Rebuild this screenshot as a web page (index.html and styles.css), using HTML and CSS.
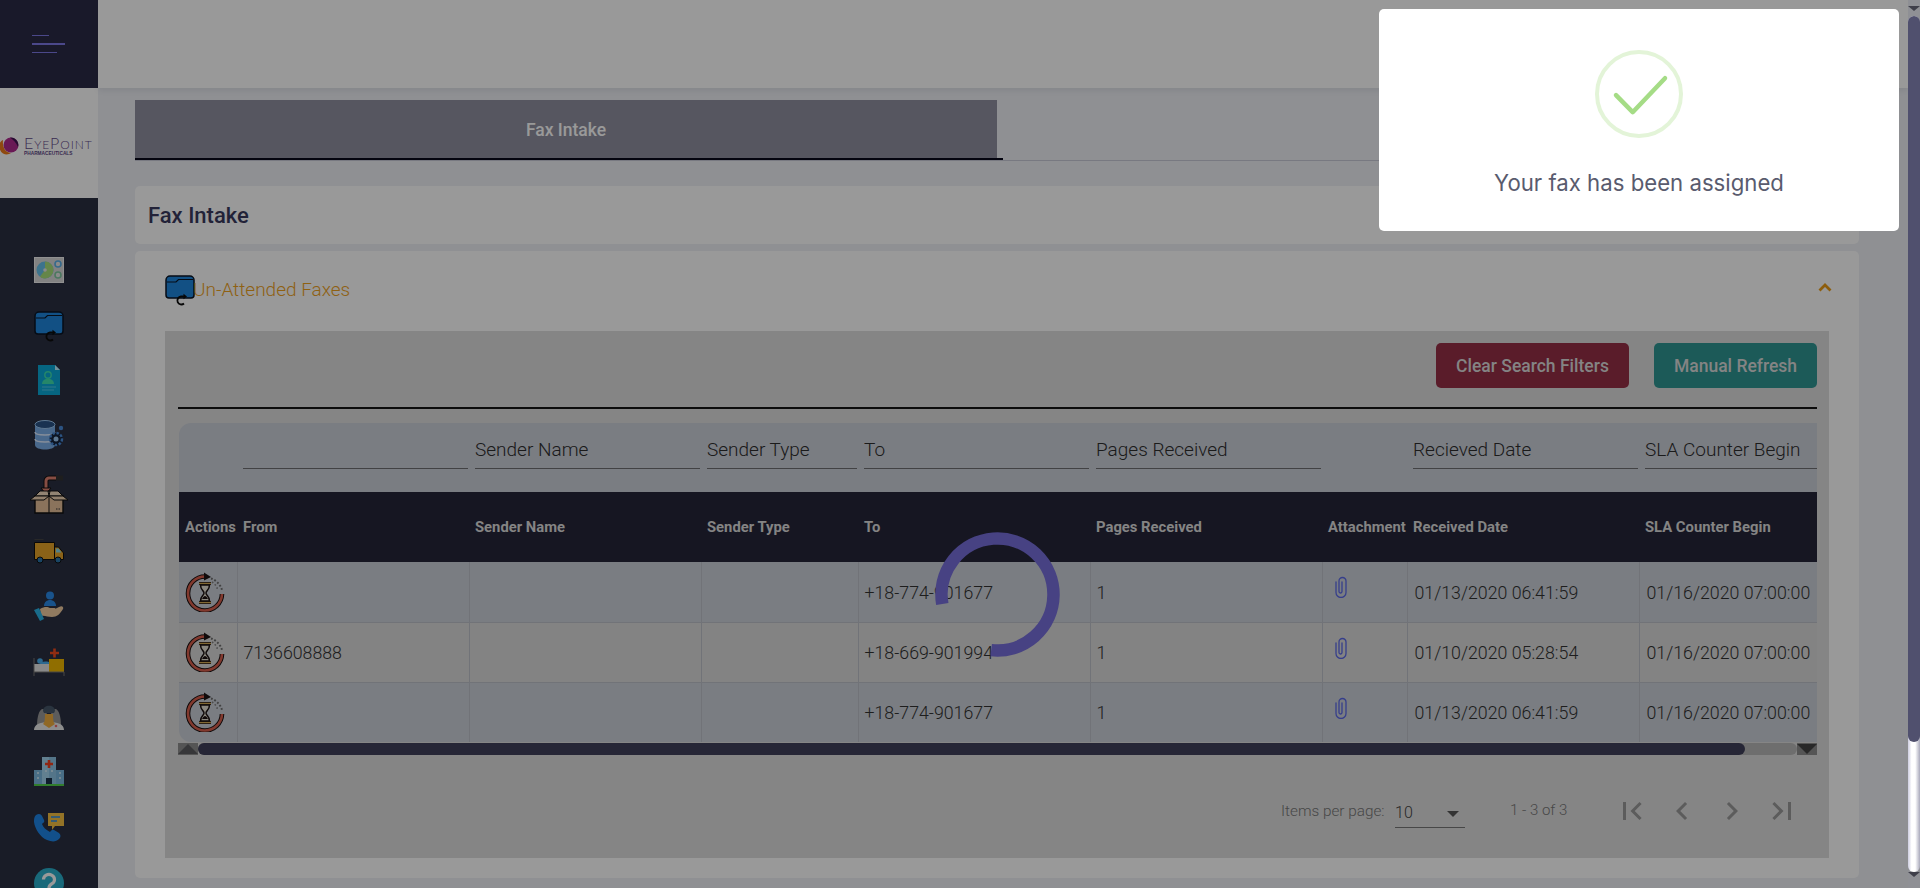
FILE: index.html
```html
<!DOCTYPE html>
<html lang="en">
<head>
<meta charset="utf-8">
<title>Fax Intake</title>
<link rel="stylesheet" href="styles.css">
</head>
<body>
<svg class="defs" width="0" height="0" aria-hidden="true">
  <symbol id="i-folder" viewBox="0 0 30 30" overflow="visible">
    <path d="M1 6a4 4 0 0 1 4-4h20a4 4 0 0 1 4 4v15a3 3 0 0 1-3 3H4a3 3 0 0 1-3-3z" fill="#1f86dc" stroke="#0a1424" stroke-width="1.500"/>
    <path d="M2 8h9l2.500-2.500H28" fill="none" stroke="#0a1424" stroke-width="1.200"/>
    <path d="M19 22.500h-3a4 4 0 1 0 3 7" fill="none" stroke="#0c0c0c" stroke-width="1.800"/>
    <path d="M18.500 19.800l3.500 2.700-3.500 2.700z" fill="#0c0c0c"/>
  </symbol>
  <symbol id="i-wait" viewBox="0 0 40 40">
    <path d="M37 22A17 17 0 1 1 20 4.500" fill="none" stroke="#1c1212" stroke-width="4.600"/>
    <path d="M37 22A17 17 0 1 1 20 4.500" fill="none" stroke="#d8604e" stroke-width="2.600"/>
    <path d="M19 .5l7 4.500-7 3.500z" fill="#1c1212"/>
    <path d="M26 6.500A17 17 0 0 1 37 18" fill="none" stroke="#6e6e6e" stroke-width="2" stroke-dasharray="1.800 1.800"/>
    <path d="M27 10A13 13 0 0 1 32.500 17" fill="none" stroke="#808080" stroke-width="1.600" stroke-dasharray="1.600 2"/>
    <path d="M14 11.500h12M14 30.500h12" stroke="#1c1212" stroke-width="3"/>
    <path d="M14 11.500h12M14 30.500h12" stroke="#d7ad55" stroke-width="1.400"/>
    <path d="M15.500 13c0 5 3.500 5.500 3.500 8s-3.500 3-3.500 8h9c0-5-3.500-5.500-3.500-8s3.500-3 3.500-8z" fill="#e7e2d4" stroke="#1c1212" stroke-width="1.500"/>
    <path d="M17 27c1-2 2-3 3-3s2 1 3 3z" fill="#1c1212"/>
  </symbol>
  <symbol id="i-clip" viewBox="0 0 12 22">
    <path d="M1 6v10.500a5 5 0 0 0 10 0V5a3.500 3.500 0 0 0-7 0v10.500a1.500 1.500 0 0 0 3 0V6" fill="none" stroke="#5a68e8" stroke-width="1.300" stroke-linecap="round"/>
  </symbol>
</svg>

<div class="app">
  <aside class="sidebar">
    <div class="side-top">
      <span class="burger"><i class="b1"></i><i class="b2"></i><i class="b3"></i></span>
    </div>
    <div class="logo">
      <svg class="logo-mark" viewBox="0 0 19 19" width="19" height="19" aria-hidden="true">
        <path d="M3 4C-3 7-1 15 3 17.500c3 1.500 6 1 8-.5-4 0-9-4-8-13z" fill="#ee7a1c"/>
        <circle cx="11" cy="9" r="7.500" fill="#b02a8e"/>
        <path d="M10 1.500a7.500 7.500 0 0 1 8 9.500C16 6 13 3.500 10 1.500z" fill="#3d1550"/>
      </svg>
      <div class="logo-text">
        <div class="logo-name"><b>E</b>YE<b>P</b>OINT</div>
        <div class="logo-sub">PHARMACEUTICALS</div>
      </div>
    </div>
    <nav class="nav">
      <svg class="nav-icon" viewBox="0 0 30 30" aria-hidden="true"><rect x=".5" y="2.500" width="29" height="25" fill="#d9d9d9" stroke="#f0f0f0"/><circle cx="11" cy="15" r="8.500" fill="#66c0ea"/><path d="M11 15V6.500A8.500 8.500 0 0 1 11 23.500C9 23.500 7 23 6 21.500z" fill="#a8e07a"/><circle cx="11" cy="15" r="1.800" fill="#e6e6e6"/><circle cx="24" cy="9" r="3" fill="#e6e6e6" stroke="#5ab0e8" stroke-width="1.600"/><circle cx="24" cy="20" r="3" fill="#e6e6e6" stroke="#7fc8a0" stroke-width="1.600"/></svg>
      <svg class="nav-icon" aria-hidden="true"><use href="#i-folder"/></svg>
      <svg class="nav-icon" viewBox="0 0 30 30" aria-hidden="true"><path d="M4 0h17l5 5v25H4z" fill="#0aa8d8"/><path d="M21 0l5 5h-5z" fill="#bff0ff"/><circle cx="14" cy="10" r="3.200" fill="none" stroke="#3ee0b0" stroke-width="1.400"/><path d="M8 19c0-7 12-7 12 0z" fill="#3ee0b0"/><path d="M8 22h14M8 25h12" stroke="#56c8e8"/></svg>
      <svg class="nav-icon" viewBox="0 0 30 30" aria-hidden="true"><path d="M1 5v20c0 6 20 6 20 0V5z" fill="#7aaee8"/><ellipse cx="11" cy="4.500" rx="10" ry="4" fill="#2a5488" stroke="#9cc6f0"/><path d="M1 12c0 4 20 4 20 0M1 19c0 4 20 4 20 0" fill="none" stroke="#dceaff" stroke-width="1.500"/><circle cx="22" cy="19" r="6.500" fill="#14223a"/><circle cx="22" cy="19" r="6" fill="none" stroke="#4a8ad8" stroke-width="2.400" stroke-dasharray="2.500 1.500"/><circle cx="22" cy="19" r="2.500" fill="#9cc6f0"/><circle cx="27" cy="8" r="2.200" fill="#4a8ad8"/></svg>
      <svg class="nav-icon box" viewBox="0 0 38 38" aria-hidden="true"><path d="M26 3h-7a3 3 0 0 0-3 3v10" fill="none" stroke="#101010" stroke-width="5"/><path d="M26 3h-7a3 3 0 0 0-3 3v10" fill="none" stroke="#e08070" stroke-width="3"/><path d="M11 13l5 6 5-6z" fill="#e08070" stroke="#101010"/><path d="M26 .500h7v5h-7z" fill="#333"/><path d="M5 21h28v17H5z" fill="#e6c09a" stroke="#101010" stroke-width="1.400"/><path d="M5 21L10 16h10l-1 5zM19 21l-1-5h10l5 5z" fill="#f4dcc0" stroke="#101010"/><path d="M5 21L0 25h14l5-4zM33 21l5 4H24l-5-4z" fill="#f0d4b4" stroke="#101010"/><path d="M19 21v17" stroke="#101010"/><path d="M26 34h5" stroke="#333" stroke-dasharray="1.500 1"/></svg>
      <svg class="nav-icon" viewBox="0 0 30 30" aria-hidden="true"><path d="M.5 4.500h20v17H.5z" fill="#e6a428" stroke="#0e0e0e"/><path d="M.5 1.500h9" stroke="#444"/><path d="M20.500 9h4l5 6v6.500h-9z" fill="#e6a428" stroke="#0e0e0e"/><path d="M22 10.500h2.500l3 4H22z" fill="#8ad8e8"/><circle cx="6" cy="22" r="3" fill="#2a74a8" stroke="#0e0e0e"/><circle cx="24" cy="22" r="3" fill="#2a74a8" stroke="#0e0e0e"/></svg>
      <svg class="nav-icon" viewBox="0 2 30 30" aria-hidden="true"><circle cx="16" cy="4.500" r="4" fill="#2a8ae8"/><path d="M10 15c0-8 12-8 12 0z" fill="#2a8ae8"/><path d="M6 18c5-3 8-2 10-1h4c2 0 2 2 0 3h-3l8-4c3-2 5 0 4 2-3 5-6 8-11 8-4 0-8-2-11-1z" fill="#f0cca0"/><path d="M0 19l5-2 5 11-4 2z" fill="#2ab4e8"/></svg>
      <svg class="nav-icon" viewBox="0 2 30 30" aria-hidden="true"><path d="M16 7h9M20.500 2.500v9" stroke="#f04a1e" stroke-width="2.600"/><path d="M15 13h15v13H15z" fill="#f0b800"/><path d="M0 18h15v8H0z" fill="#e4e4e4"/><path d="M0 12v18M30 26v4M0 26h30" stroke="#777" stroke-width="1"/><circle cx="6" cy="15" r="2.800" fill="#4ab0f0"/><path d="M6 18c0-2 4-3 9-2v2z" fill="#4ab0f0"/></svg>
      <svg class="nav-icon" viewBox="0 1 30 30" aria-hidden="true"><path d="M3 24c0-9 2-17 6-17 5 0 6 17 6 17zM27 24c0-9-2-17-6-17-5 0-6 17-6 17z" fill="#9a9a9a"/><path d="M0 28c0-6 7-8 15-8s15 2 15 8z" fill="#ececec"/><path d="M11 12c0 8-1 9-2 10l6 4 6-4c-1-1-2-2-2-10z" fill="#f0ae3e"/><path d="M9 9c0-7 12-7 12 0l-1 2H10z" fill="#46586a"/><circle cx="22" cy="24" r="1.300" fill="#f06a6a"/></svg>
      <svg class="nav-icon" viewBox="0 2 30 30" aria-hidden="true"><path d="M0 14h30v15H0z" fill="#7ab8e0"/><path d="M8 1h14v28H8z" fill="#a4d6f0"/><path d="M15 1h7v28h-7z" fill="#8cc4e4"/><path d="M15 4v8M11 8h8" stroke="#f0401e" stroke-width="2.600"/><path d="M12 22h6v7h-6z" fill="#183048"/><path d="M3 17h2M3 22h2M25 17h2M25 22h2M11 15h2M17 15h2" stroke="#d8eefa" stroke-width="1.600"/><path d="M0 28h30v2H0z" fill="#52d04a"/></svg>
      <svg class="nav-icon" viewBox="0 0 30 30" aria-hidden="true"><path d="M2 2c3-2 5-1 6 1l2 4c1 2-1 3-2 4 1 3 4 6 8 8 1-1 2-3 4-2l5 3c2 2 2 4 0 6-3 3-7 3-12 1C6 24 1 16 0 9c0-3 0-5 2-7z" fill="#1f86e8"/><path d="M14 0h16v13H21l-3 4v-4h-4z" fill="#f6c042"/><path d="M17 4h9M17 8h6" stroke="#2a8ae8" stroke-width="1.600"/></svg>
      <svg class="nav-icon" viewBox="0 0 30 30" aria-hidden="true"><circle cx="15" cy="15" r="15" fill="#2ab0cc"/><path d="M9.500 11.500a5.500 5 0 1 1 8.500 4.200c-2 1.300-3 2-3 4.300" fill="none" stroke="#fff" stroke-width="3.200"/><circle cx="15" cy="24.500" r="2" fill="#fff"/></svg>
    </nav>
  </aside>

  <main class="main">
    <header class="topbar"></header>
    <div class="content">
      <div class="tabs">
        <div class="tab tab-active">Fax Intake</div>
      </div>

      <section class="card title-card">
        <h1 class="page-title">Fax Intake</h1>
      </section>

      <section class="card accordion">
        <div class="acc-head">
          <svg class="acc-icon" aria-hidden="true"><use href="#i-folder"/></svg>
          <span class="acc-title">Un-Attended Faxes</span>
          <svg class="chevron" viewBox="0 0 14 9" width="14" height="9" aria-hidden="true"><path d="M1.500 7.500L7 2l5.500 5.500" fill="none" stroke="#eb9c14" stroke-width="2.800"/></svg>
        </div>

        <div class="panel">
          <div class="actions">
            <button class="btn btn-red">Clear Search Filters</button>
            <button class="btn btn-teal">Manual Refresh</button>
          </div>
          <hr class="rule">
          <div class="table-wrap">
            <table class="grid">
              <colgroup>
                <col class="c-act"><col class="c-wide"><col class="c-wide"><col class="c-type"><col class="c-wide"><col class="c-wide"><col class="c-att"><col class="c-wide"><col class="c-wide">
              </colgroup>
              <thead>
                <tr class="filters">
                  <td></td>
                  <td><input aria-label="From"></td>
                  <td><input placeholder="Sender Name"></td>
                  <td><input placeholder="Sender Type"></td>
                  <td><input placeholder="To"></td>
                  <td><input placeholder="Pages Received"></td>
                  <td></td>
                  <td><input placeholder="Recieved Date"></td>
                  <td><input placeholder="SLA Counter Begin"></td>
                </tr>
                <tr class="heads">
                  <th>Actions</th><th>From</th><th>Sender Name</th><th>Sender Type</th><th>To</th><th>Pages Received</th><th>Attachment</th><th>Received Date</th><th>SLA Counter Begin</th>
                </tr>
              </thead>
              <tbody>
                <tr class="odd">
                  <td class="act"><svg class="wait" aria-hidden="true"><use href="#i-wait"/></svg></td><td></td><td></td><td></td><td>+18-774-901677</td><td>1</td>
                  <td class="att"><svg class="clip" aria-hidden="true"><use href="#i-clip"/></svg></td><td class="date">01/13/2020 06:41:59</td><td class="date">01/16/2020 07:00:00</td>
                </tr>
                <tr class="even">
                  <td class="act"><svg class="wait" aria-hidden="true"><use href="#i-wait"/></svg></td><td>7136608888</td><td></td><td></td><td>+18-669-901994</td><td>1</td>
                  <td class="att"><svg class="clip" aria-hidden="true"><use href="#i-clip"/></svg></td><td class="date">01/10/2020 05:28:54</td><td class="date">01/16/2020 07:00:00</td>
                </tr>
                <tr class="odd">
                  <td class="act"><svg class="wait" aria-hidden="true"><use href="#i-wait"/></svg></td><td></td><td></td><td></td><td>+18-774-901677</td><td>1</td>
                  <td class="att"><svg class="clip" aria-hidden="true"><use href="#i-clip"/></svg></td><td class="date">01/13/2020 06:41:59</td><td class="date">01/16/2020 07:00:00</td>
                </tr>
              </tbody>
            </table>
          </div>
          <div class="hscroll">
            <span class="hs-btn"><i class="tri-up"></i></span>
            <div class="hs-track"><div class="hs-thumb"></div></div>
            <span class="hs-btn"><i class="tri-down"></i></span>
          </div>
          <div class="paginator">
            <span class="pg-label">Items per page:</span>
            <div class="pg-select"><span>10</span><i class="tri-small"></i></div>
            <span class="pg-range">1 - 3 of 3</span>
            <div class="pg-buttons">
              <svg class="pg-icon" viewBox="0 0 24 24" aria-hidden="true"><path d="M18.410 16.590L13.820 12l4.590-4.590L17 6l-6 6 6 6zM6 6h2v12H6z"/></svg>
              <svg class="pg-icon" viewBox="0 0 24 24" aria-hidden="true"><path d="M15.410 7.410L14 6l-6 6 6 6 1.410-1.410L10.830 12z"/></svg>
              <svg class="pg-icon" viewBox="0 0 24 24" aria-hidden="true"><path d="M10 6L8.590 7.410 13.170 12l-4.580 4.590L10 18l6-6z"/></svg>
              <svg class="pg-icon" viewBox="0 0 24 24" aria-hidden="true"><path d="M5.590 7.410L10.180 12l-4.590 4.590L7 18l6-6-6-6zM16 6h2v12h-2z"/></svg>
            </div>
          </div>
        </div>
      </section>
    </div>
  </main>

  <div class="vscroll">
    <i class="vs-arrow"></i>
    <div class="vs-track"><div class="vs-thumb"></div></div>
    <i class="vs-arrow"></i>
  </div>

  <div class="overlay"></div>

  <svg class="spinner" viewBox="0 0 125 125" width="125" height="125" aria-hidden="true">
    <path d="M7.300 72A56 56 0 1 1 56.200 118.100" fill="none" stroke="#474283" stroke-width="12.500"/>
  </svg>

  <div class="modal" role="dialog">
    <svg class="success" viewBox="0 0 88 88" width="88" height="88" aria-hidden="true">
      <circle cx="44" cy="44" r="42" fill="none" stroke="#e3f4d8" stroke-width="4"/>
      <path d="M21 45.200L37.700 62.200 70 28.200" fill="none" stroke="#a5dc86" stroke-width="4.500" stroke-linecap="round" stroke-linejoin="round"/>
    </svg>
    <p class="modal-text">Your fax has been assigned</p>
  </div>
</div>
</body>
</html>
```

FILE: styles.css
```css
* { box-sizing: border-box; }
html, body { margin: 0; height: 100%; overflow: hidden; }
body { font-family: Roboto, "Liberation Sans", sans-serif; color: #333; background: #eef0f5; }
.defs { position: absolute; }

.app { position: relative; display: flex; width: 1920px; height: 888px; overflow: hidden; }

/* sidebar */
.sidebar { flex: 0 0 98px; background: #2a2f41; overflow: hidden; }
.side-top { height: 88px; background: #2b2b46; padding: 35px 0 0 32px; }
.burger { display: flex; flex-direction: column; align-items: flex-start; }
.burger i { display: block; background: #7d78e6; }
.b1 { width: 17px; height: 1px; margin-bottom: 7px; }
.b2 { width: 33px; height: 2px; margin-bottom: 7px; }
.b3 { width: 25px; height: 1px; }

.logo { height: 110px; background: #fff; display: flex; align-items: center; gap: 5px; padding-top: 5px; overflow: hidden; }
.logo-mark { flex: none; margin-top: -1px; }
.logo-text { color: #5f4888; line-height: 1; }
.logo-name { font-family: Lato, "Liberation Sans", sans-serif; font-size: 12px; letter-spacing: .9px; font-weight: 300; white-space: nowrap; }
.logo-name b { font-size: 16px; font-weight: 300; }
.logo-sub { font-family: "Liberation Sans", sans-serif; font-size: 4.800px; font-weight: 700; letter-spacing: 0; margin-top: 1px; white-space: nowrap; }

.nav { display: flex; flex-direction: column; align-items: center; gap: 25px; padding-top: 57px; }
.nav-icon { display: block; width: 30px; height: 30px; flex: none; overflow: visible; }
.nav-icon.box { width: 38px; height: 38px; }

/* main */
.main { flex: 1 1 auto; min-width: 0; display: flex; flex-direction: column; }
.topbar { height: 88px; flex: none; background: #fff; box-shadow: 0 2px 6px rgba(60, 60, 90, .1); }
.content { padding: 12px 49px 0 37px; }

.tabs { height: 61px; border-bottom: 1px solid #c9cad8; margin-bottom: 25px; }
.tab { position: relative; width: 862px; height: 60px; display: flex; align-items: center; justify-content: center; font-size: 17.500px; font-weight: 500; color: #fff; }
.tab-active { background: #8f8fa0; }
.tab-active::after { content: ""; position: absolute; left: 0; bottom: 0; width: 868px; height: 2px; background: #08081a; }

.card { background: #fff; border-radius: 5px; }
.title-card { height: 58px; display: flex; align-items: center; padding-left: 13px; margin-bottom: 7px; }
.page-title { margin: 0; font-size: 22px; font-weight: 500; color: #3a3a5e; }

.accordion { height: 627px; }
.acc-head { height: 80px; display: flex; align-items: center; padding: 0 30px; }
.acc-icon { width: 30px; height: 30px; flex: none; margin-top: -4px; overflow: visible; }
.acc-title { font-size: 19px; font-weight: 300; color: #eea21f; margin: -3px 0 0 -2px; }
.chevron { margin: -8px -3px 0 auto; }

.panel { height: 527px; margin: 0 30px; padding: 12px 12px 0 13px; background: #dedede; display: flex; flex-direction: column; }
.actions { display: flex; justify-content: flex-end; gap: 25px; height: 45px; flex: none; }
.btn { height: 45px; border: 0; border-radius: 5px; font-family: Roboto, sans-serif; font-size: 17.500px; font-weight: 500; color: #dcdcdc; padding: 0; }
.btn-red { width: 193px; background: #962f46; }
.btn-teal { width: 163px; background: #2f9693; }
.rule { flex: none; height: 2px; border: 0; margin: 19px 0 14px; background: #141414; }

.table-wrap { flex: none; width: 1638px; height: 319px; margin-left: 1px; overflow: hidden; border-radius: 12px 0 0 12px; }
.grid { width: 1691px; table-layout: fixed; border-collapse: collapse; }
.c-act { width: 58px; }
.c-wide { width: 232px; }
.c-type { width: 157px; }
.c-att { width: 85px; }

.filters { height: 69px; background: #cbd0d9; }
.filters td { padding: 8px 1.500px 0 6px; vertical-align: top; }
.filters input { display: block; width: 100%; height: 38px; border: 0; border-bottom: 1px solid #6e6e72; background: transparent; padding: 0; font-family: Roboto, sans-serif; font-size: 19px; font-weight: 300; color: #333; outline: 0; }
.filters input::placeholder { color: #2e2e2e; opacity: 1; }

.heads { height: 70px; background: #252539; }
.heads th { padding: 0 0 0 6px; text-align: left; font-size: 14.800px; font-weight: 700; color: #dcdcdc; white-space: nowrap; overflow: hidden; }

tbody tr { height: 60px; }
tbody td { padding: 2px 0 0 6px; border-right: 1px solid #bcc0c8; border-bottom: 1px solid #bcc0c8; font-size: 17.750px; font-weight: 300; color: #333; white-space: nowrap; overflow: hidden; }
.odd { background: #cbd0d9; }
.even { background: #dadada; }
td.act { padding: 0 0 0 6px; }
td.date { padding-left: 7px; }
.wait { display: block; width: 40px; height: 40px; }
td.att { vertical-align: top; padding: 14px 0 0 12px; }
.clip { display: block; width: 12px; height: 22px; }

.hscroll { flex: none; display: flex; height: 12px; margin-top: 1px; }
.hs-btn { flex: 0 0 20px; background: #8e8e8e; display: flex; align-items: center; justify-content: center; }
.tri-up { border: solid transparent; border-width: 0 10px 10px; border-bottom-color: #5c5c60; }
.tri-down { border: solid transparent; border-width: 10px 10px 0; border-top-color: #444; }
.hs-track { flex: 1; background: #b8b8b8; border-radius: 6px; }
.hs-thumb { width: 1547px; height: 12px; background: #40405a; border-radius: 6px; }

.paginator { flex: 1; display: flex; align-items: center; justify-content: flex-end; padding-right: 17px; padding-top: 9px; }
.pg-label { font-size: 15.300px; font-weight: 300; color: #777; width: 102px; white-space: nowrap; margin-right: 12px; }
.pg-select { position: relative; width: 70px; height: 28px; border-bottom: 1px solid #777; font-size: 16px; font-weight: 300; color: #444; padding-top: 3px; margin-top: 6px; }
.tri-small { position: absolute; right: 6px; top: 11px; border: solid transparent; border-width: 6px 6px 0; border-top-color: #555; }
.pg-range { font-size: 15px; font-weight: 300; color: #777; margin-left: 45px; width: 104px; white-space: nowrap; margin-top: -2px; }
.pg-buttons { display: flex; gap: 14px; }
.pg-icon { display: block; width: 36px; height: 36px; fill: #9a9a9a; }

/* page scrollbar */
.vscroll { flex: 0 0 12px; position: relative; z-index: 3; background: #8f9095; display: flex; flex-direction: column; padding: 6px 0; }
.vs-arrow { display: block; flex: none; height: 10px; width: 12px; border: solid transparent; border-width: 5px 6px; border-top-color: #3f3f4a; }
.vs-track { flex: 1; background: linear-gradient(90deg, #cdcde0, #fff 30%, #fff 60%, #a9a9bb); border-radius: 6px; }
.vs-thumb { height: 726px; background: #50506e; border-radius: 6px; }

.overlay { position: absolute; left: 0; top: 0; right: 12px; bottom: 0; background: rgba(0, 0, 0, .4); z-index: 2; }
.spinner { position: absolute; left: 935px; top: 531.500px; z-index: 4; }

.modal { position: absolute; left: 1379px; top: 9px; width: 520px; height: 222px; background: #fff; border-radius: 5px; z-index: 5; display: flex; flex-direction: column; align-items: center; padding-top: 41px; }
.success { display: block; flex: none; }
.modal-text { margin: 31px 0 0; font-family: Inter, "Noto Sans", sans-serif; font-size: 22.200px; line-height: 28px; font-weight: 400; color: #595b6e; }
```
